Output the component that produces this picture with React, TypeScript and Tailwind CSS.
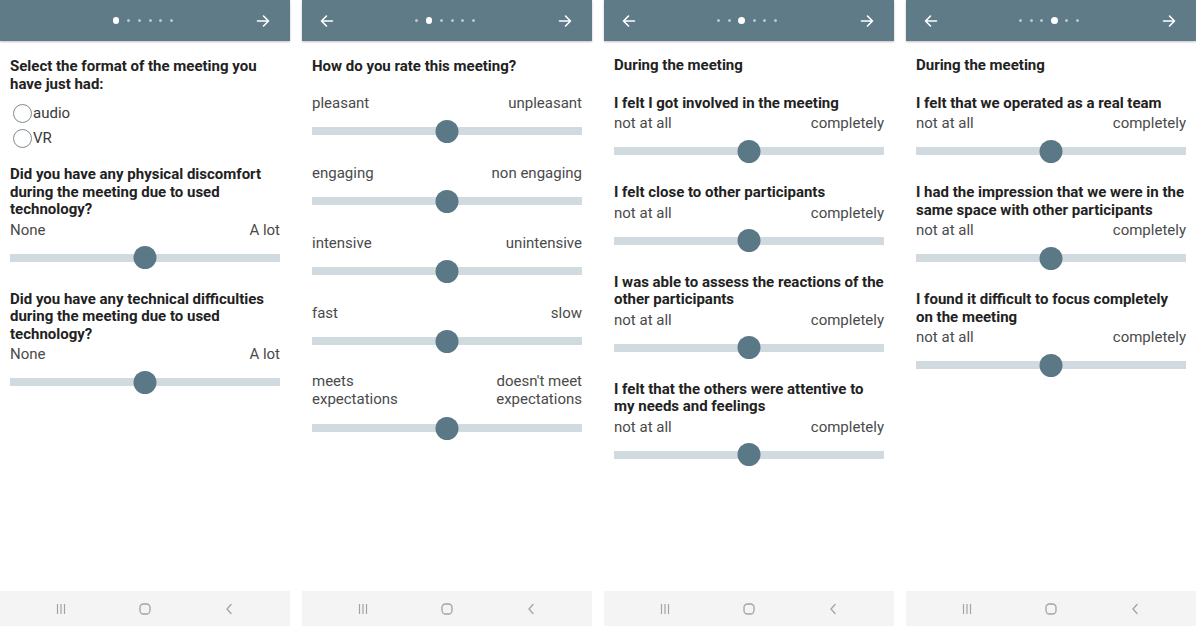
import React from "react";

type Block = { q?: string[]; left: string[]; right: string[] };

function Arrow({ dir }: { dir: "left" | "right" }) {
  return (
    <svg width="16" height="16" viewBox="0 0 16 16" fill="none" stroke="white" strokeWidth="1.6" strokeLinecap="round" strokeLinejoin="round">
      {dir === "right" ? (
        <path d="M2.5 8h11M8.5 3l5 5-5 5" />
      ) : (
        <path d="M13.5 8h-11M7.5 3l-5 5 5 5" />
      )}
    </svg>
  );
}

function Header({ active }: { active: number }) {
  return (
    <div className="h-[41px] bg-[#5f7b88] shadow-[0_1px_2px_rgba(0,0,0,0.25)] flex items-center px-[17px] relative z-10">
      <div className="w-[16px]">{active > 0 && <Arrow dir="left" />}</div>
      <div className="flex-1 flex justify-center items-center gap-[7.8px] pr-[2px]">
        {[0, 1, 2, 3, 4, 5].map((i) =>
          i === active ? (
            <span key={i} className="w-[6.5px] h-[6.5px] rounded-full bg-white" />
          ) : (
            <span key={i} className="w-[3px] h-[3px] rounded-full bg-[#b9c9d0]" />
          )
        )}
      </div>
      <div className="w-[16px] mr-[2px]">
        <Arrow dir="right" />
      </div>
    </div>
  );
}

function NavBar() {
  return (
    <div className="h-[35px] mb-[2px] bg-[#f4f4f4] flex justify-center items-center gap-[64px]">
      <svg width="20" height="12" viewBox="0 0 20 12" stroke="#a3a3a3" strokeWidth="1.2">
        <path d="M6.5 1v10M10 1v10M13.5 1v10" />
      </svg>
      <svg width="20" height="12" viewBox="0 0 20 12" fill="none" stroke="#a3a3a3" strokeWidth="1.3">
        <rect x="5" y="1" width="10" height="10" rx="3.5" />
      </svg>
      <svg width="20" height="12" viewBox="0 0 20 12" fill="none" stroke="#a3a3a3" strokeWidth="1.3" strokeLinecap="round">
        <path d="M12 1.5L8 6l4 4.5" />
      </svg>
    </div>
  );
}

function Slider() {
  return (
    <div className="h-[34px] flex items-center relative">
      <div className="h-[8px] w-full bg-[#d0dadf]" />
      <div className="absolute left-1/2 -translate-x-1/2 w-[23px] h-[23px] rounded-full bg-[#5b7886]" />
    </div>
  );
}

function Labels({ left, right }: { left: string[]; right: string[] }) {
  const multi = left.length > 1;
  return (
    <div className={`flex justify-between text-[15px] text-[#4a4a4a] ${multi ? "leading-[18px] mb-[3px]" : "leading-[22px]"}`}>
      <div>
        {left.map((l) => (
          <div key={l}>{l}</div>
        ))}
      </div>
      <div className="text-right">
        {right.map((r) => (
          <div key={r}>{r}</div>
        ))}
      </div>
    </div>
  );
}

function Question({ lines }: { lines: string[] }) {
  return (
    <div className="text-[15px] font-bold leading-[17.5px] text-[#222]">
      {lines.map((l) => (
        <div key={l}>{l}</div>
      ))}
    </div>
  );
}

function SliderBlock({ b }: { b: Block }) {
  return (
    <div>
      {b.q && <Question lines={b.q} />}
      <Labels left={b.left} right={b.right} />
      <Slider />
    </div>
  );
}

function Radio({ label }: { label: string }) {
  return (
    <div className="h-[25px] flex items-center gap-[1px] pl-[3px] text-[15px] text-[#3a3a3a]">
      <span className="w-[19px] h-[19px] rounded-full border-[1.5px] border-[#7d8b91]" />
      <span>{label}</span>
    </div>
  );
}

function Panel({ active, children }: { active: number; children: React.ReactNode }) {
  return (
    <div className="w-[290px] h-[628px] flex flex-col bg-white">
      <Header active={active} />
      <div className="flex-1 px-[10px]">{children}</div>
      <NavBar />
    </div>
  );
}

const p2: Block[] = [
  { left: ["pleasant"], right: ["unpleasant"] },
  { left: ["engaging"], right: ["non engaging"] },
  { left: ["intensive"], right: ["unintensive"] },
  { left: ["fast"], right: ["slow"] },
  { left: ["meets", "expectations"], right: ["doesn't meet", "expectations"] },
];

const scale = { left: ["not at all"], right: ["completely"] };

const p3: Block[] = [
  { q: ["I felt I got involved in the meeting"], ...scale },
  { q: ["I felt close to other participants"], ...scale },
  { q: ["I was able to assess the reactions of the", "other participants"], ...scale },
  { q: ["I felt that the others were attentive to", "my needs and feelings"], ...scale },
];

const p4: Block[] = [
  { q: ["I felt that we operated as a real team"], ...scale },
  { q: ["I had the impression that we were in the", "same space with other participants"], ...scale },
  { q: ["I found it difficult to focus completely", "on the meeting"], ...scale },
];

export default function App() {
  return (
    <div className="w-[1196px] h-[628px] bg-white flex gap-[12px] overflow-hidden font-['Roboto',sans-serif]">
      <Panel active={0}>
        <div className="pt-[17px]">
          <Question lines={["Select the format of the meeting you", "have just had:"]} />
          <div className="mt-[8px]">
            <Radio label="audio" />
            <Radio label="VR" />
          </div>
          <div className="mt-[15px] flex flex-col gap-[16px]">
            <SliderBlock b={{ q: ["Did you have any physical discomfort", "during the meeting due to used", "technology?"], left: ["None"], right: ["A lot"] }} />
            <SliderBlock b={{ q: ["Did you have any technical difficulties", "during the meeting due to used", "technology?"], left: ["None"], right: ["A lot"] }} />
          </div>
        </div>
      </Panel>
      <Panel active={1}>
        <div className="pt-[16px]">
          <div className="text-[15px] font-bold leading-[18px] text-[#222]">How do you rate this meeting?</div>
          <div className="mt-[17px] flex flex-col gap-[14px]">
            {p2.map((b, i) => (
              <SliderBlock key={i} b={b} />
            ))}
          </div>
        </div>
      </Panel>
      <Panel active={2}>
        <div className="pt-[15px]">
          <div className="text-[15px] font-bold leading-[18px] text-[#222]">During the meeting</div>
          <div className="mt-[20.5px] flex flex-col gap-[16px]">
            {p3.map((b, i) => (
              <SliderBlock key={i} b={b} />
            ))}
          </div>
        </div>
      </Panel>
      <Panel active={3}>
        <div className="pt-[15px]">
          <div className="text-[15px] font-bold leading-[18px] text-[#222]">During the meeting</div>
          <div className="mt-[20.5px] flex flex-col gap-[16px]">
            {p4.map((b, i) => (
              <SliderBlock key={i} b={b} />
            ))}
          </div>
        </div>
      </Panel>
    </div>
  );
}
